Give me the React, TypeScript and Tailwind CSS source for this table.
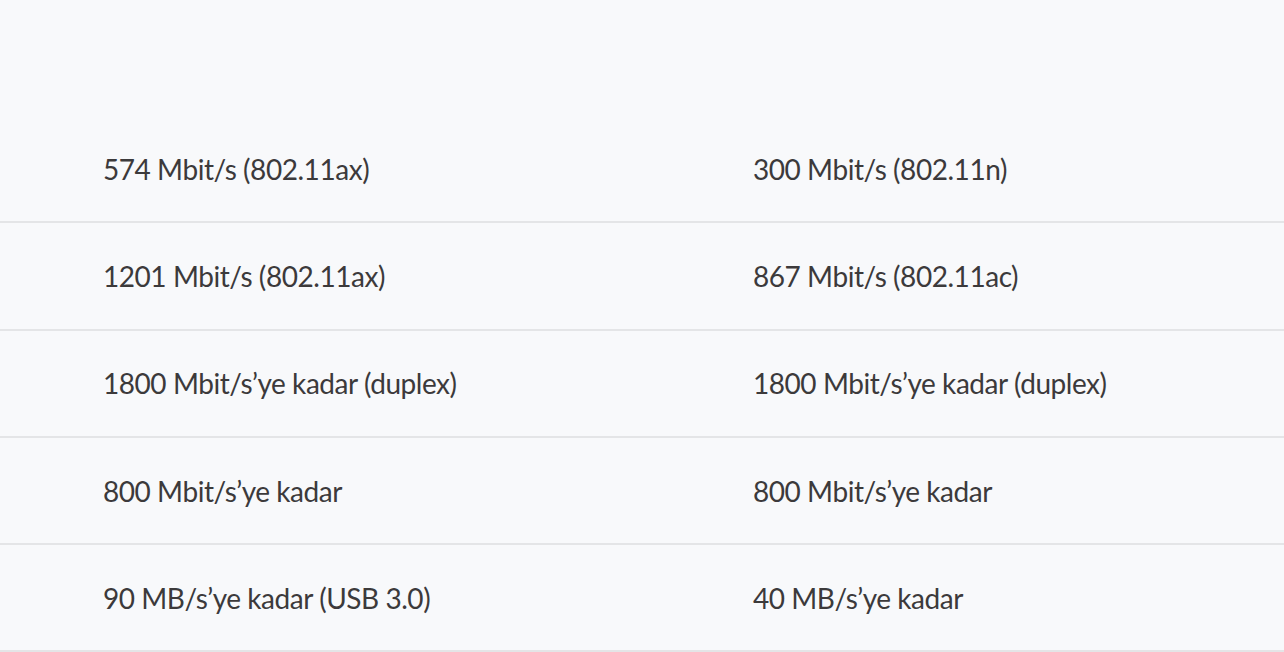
const rows: [string, string][] = [
  ['574 Mbit/s (802.11ax)', '300 Mbit/s (802.11n)'],
  ['1201 Mbit/s (802.11ax)', '867 Mbit/s (802.11ac)'],
  ['1800 Mbit/s’ye kadar (duplex)', '1800 Mbit/s’ye kadar (duplex)'],
  ['800 Mbit/s’ye kadar', '800 Mbit/s’ye kadar'],
  ['90 MB/s’ye kadar (USB 3.0)', '40 MB/s’ye kadar'],
];

export default function App() {
  return (
    <div className="min-h-[652px] w-full bg-[#f8f9fb] pt-[116px] font-['Lato',sans-serif] text-[#3c3a3b]">
      {rows.map(([left, right], i) => (
        <div key={i} className="flex h-[107.3px] items-center border-b-2 border-[#e4e5e7]">
          <div className="w-[753px] pl-[103px] text-[28px] tracking-[-0.45px]">{left}</div>
          <div className="flex-1 text-[28px] tracking-[-0.45px]">{right}</div>
        </div>
      ))}
    </div>
  );
}
